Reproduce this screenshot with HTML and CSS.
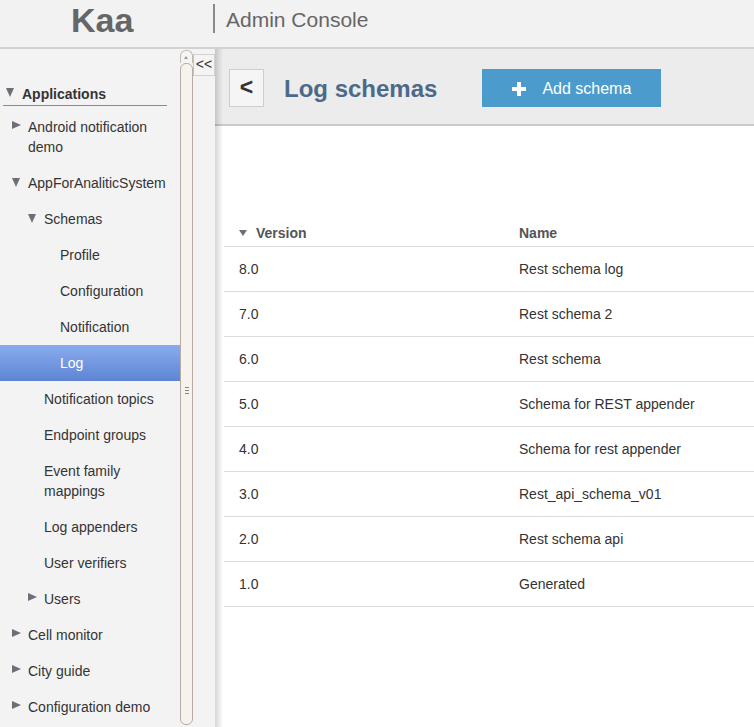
FILE: index.html
```html
<!DOCTYPE html>
<html>
<head>
<meta charset="utf-8">
<link rel="stylesheet" href="styles.css">
</head>
<body>
<header class="topbar">
  <div class="logo">Kaa</div>
  <div class="divider"></div>
  <div class="console">Admin Console</div>
</header>
<div class="main">
  <aside class="sidebar">
    <div class="apps"><span class="caret down"></span><span>Applications</span></div>
    <ul class="tree">
      <li class="row lv1"><span class="caret right"></span><span class="label">Android notification demo</span></li>
      <li class="row lv1"><span class="caret down"></span><span class="label">AppForAnaliticSystem</span></li>
      <li class="row lv2"><span class="caret down"></span><span class="label">Schemas</span></li>
      <li class="row lv3"><span class="caret"></span><span class="label">Profile</span></li>
      <li class="row lv3"><span class="caret"></span><span class="label">Configuration</span></li>
      <li class="row lv3"><span class="caret"></span><span class="label">Notification</span></li>
      <li class="row lv3 selected"><span class="caret"></span><span class="label">Log</span></li>
      <li class="row lv2"><span class="caret"></span><span class="label">Notification topics</span></li>
      <li class="row lv2"><span class="caret"></span><span class="label">Endpoint groups</span></li>
      <li class="row lv2"><span class="caret"></span><span class="label">Event family mappings</span></li>
      <li class="row lv2"><span class="caret"></span><span class="label">Log appenders</span></li>
      <li class="row lv2"><span class="caret"></span><span class="label">User verifiers</span></li>
      <li class="row lv2"><span class="caret right"></span><span class="label">Users</span></li>
      <li class="row lv1"><span class="caret right"></span><span class="label">Cell monitor</span></li>
      <li class="row lv1"><span class="caret right"></span><span class="label">City guide</span></li>
      <li class="row lv1"><span class="caret right"></span><span class="label">Configuration demo</span></li>
    </ul>
  </aside>
  <div class="scrollbar">
    <div class="sb-up"><span class="sb-arrow"></span></div>
    <div class="sb-thumb"><span class="grip"></span><span class="grip"></span><span class="grip"></span></div>
  </div>
  <div class="collapse-col">
    <div class="collapse-btn">&lt;&lt;</div>
  </div>
  <section class="content">
    <div class="toolbar">
      <div class="back-btn">&lt;</div>
      <h1 class="title">Log schemas</h1>
      <div class="add-btn">
        <svg class="plus" width="14" height="14" viewBox="0 0 14 14"><rect x="5" y="0" width="4" height="14" fill="#fff"/><rect x="0" y="5" width="14" height="4" fill="#fff"/></svg>
        <span>Add schema</span>
      </div>
    </div>
    <div class="panel">
      <table class="grid">
        <thead>
          <tr><th class="c1"><span class="sort"></span>Version</th><th>Name</th></tr>
        </thead>
        <tbody>
          <tr><td class="c1">8.0</td><td>Rest schema log</td></tr>
          <tr><td class="c1">7.0</td><td>Rest schema 2</td></tr>
          <tr><td class="c1">6.0</td><td>Rest schema</td></tr>
          <tr><td class="c1">5.0</td><td>Schema for REST appender</td></tr>
          <tr><td class="c1">4.0</td><td>Schema for rest appender</td></tr>
          <tr><td class="c1">3.0</td><td>Rest_api_schema_v01</td></tr>
          <tr><td class="c1">2.0</td><td>Rest schema api</td></tr>
          <tr><td class="c1">1.0</td><td>Generated</td></tr>
        </tbody>
      </table>
    </div>
  </section>
</div>
</body>
</html>
```
FILE: styles.css
```css
* { box-sizing: border-box; }
html, body { margin: 0; padding: 0; }
body {
  width: 754px;
  height: 727px;
  overflow: hidden;
  font-family: "Liberation Sans", Arial, sans-serif;
  color: #333;
  background: #f3f3f3;
}

.topbar {
  height: 49px;
  background: #f2f2f2;
  border-bottom: 2px solid #d2d2d2;
  display: flex;
  align-items: center;
  padding: 0 0 6px 71px;
}
.logo {
  font-size: 34px;
  font-weight: bold;
  color: #666;
  width: 142px;
}
.divider {
  width: 2px;
  height: 29px;
  background: #8a8a8a;
  margin-bottom: 5px;
}
.console {
  font-size: 21px;
  color: #666;
  margin-left: 11px;
  margin-bottom: 2px;
}

.main {
  display: flex;
  height: 678px;
}

.sidebar {
  width: 180px;
  flex: none;
  background: #f3f3f3;
  overflow: hidden;
  padding-top: 35px;
}
.apps {
  display: flex;
  align-items: flex-start;
  margin-left: 3px;
  width: 164px;
  padding-left: 3px;
  padding-bottom: 1px;
  font-size: 14px;
  font-weight: bold;
  line-height: 20px;
  border-bottom: 1px solid #8a8a8a;
  color: #333;
}
.apps .caret { width: 16px; height: 20px; }

.tree {
  list-style: none;
  margin: 3px 0 0 0;
  padding: 0;
}
.row {
  display: flex;
  align-items: flex-start;
  font-size: 14px;
  line-height: 20px;
  padding-top: 8px;
  padding-bottom: 8px;
  padding-right: 4px;
}
.lv1 { padding-left: 12px; }
.lv2 { padding-left: 28px; }
.lv3 { padding-left: 44px; }
.row .label { flex: 1; }
.caret {
  width: 16px;
  flex: none;
  height: 20px;
  position: relative;
}
.caret.right::before {
  content: "";
  position: absolute;
  left: 0;
  top: 4px;
  border-left: 9px solid #6c6f78;
  border-top: 4.5px solid transparent;
  border-bottom: 4.5px solid transparent;
}
.caret.down::before {
  content: "";
  position: absolute;
  left: 0;
  top: 5px;
  border-top: 9px solid #6c6f78;
  border-left: 4.5px solid transparent;
  border-right: 4.5px solid transparent;
}
.apps .caret.down::before { top: 4px; }
.selected {
  background: linear-gradient(#8aacef, #5e85d3);
  color: #fff;
}

.scrollbar {
  width: 13px;
  flex: none;
  background: #f3f3f3;
  padding-top: 1px;
  display: flex;
  flex-direction: column;
}
.sb-up {
  height: 13px;
  border: 1px solid #c2bab2;
  border-bottom: none;
  border-radius: 6px 6px 0 0;
  background: #f7f5f2;
  position: relative;
}
.sb-arrow {
  position: absolute;
  left: 3px;
  top: 5px;
  border-bottom: 3px solid #9a9a9a;
  border-left: 2.5px solid transparent;
  border-right: 2.5px solid transparent;
}
.sb-thumb {
  flex: 1;
  margin-bottom: 2px;
  border: 1px solid #b5ada5;
  border-radius: 6px;
  background: #f6f3ef;
  display: flex;
  flex-direction: column;
  align-items: center;
  justify-content: center;
  gap: 2px;
  padding-bottom: 8px;
}
.grip {
  width: 4px;
  height: 1px;
  background: #8a8480;
}

.collapse-col {
  width: 22px;
  flex: none;
  background: #f3f3f3;
  padding-top: 5px;
}
.collapse-btn {
  height: 22px;
  border: 1px solid #d2d2d2;
  border-left: 1px solid #c9c3bd;
  font-size: 14px;
  line-height: 19px;
  text-align: center;
  color: #333;
  background: #f4f4f4;
}

.content {
  flex: 1;
  min-width: 0;
  background: #fff;
  position: relative;
  display: flex;
  flex-direction: column;
}
.content::after {
  content: "";
  position: absolute;
  left: 0;
  top: 0;
  bottom: 0;
  width: 8px;
  background: linear-gradient(to right, rgba(0,0,0,0.16), rgba(0,0,0,0));
}

.toolbar {
  height: 77px;
  flex: none;
  background: #ececec;
  border-bottom: 2px solid #c9c9c9;
  display: flex;
  align-items: flex-start;
  padding: 20px 0 0 14px;
}
.back-btn {
  width: 35px;
  height: 38px;
  border: 1px solid #cdcdcd;
  background: #f5f5f5;
  font-size: 23px;
  font-weight: bold;
  line-height: 35px;
  text-align: center;
  color: #333;
}
.title {
  margin: 0 0 0 20px;
  padding-top: 1px;
  font-size: 24px;
  font-weight: bold;
  color: #4b6a89;
  line-height: 38px;
}
.add-btn {
  margin-left: 45px;
  width: 179px;
  height: 38px;
  background: #4b9bcc;
  color: #fff;
  font-size: 16px;
  display: flex;
  align-items: center;
  padding-left: 30px;
  padding-top: 1px;
}
.plus { margin-right: 16px; flex: none; }

.panel {
  flex: 1;
  padding: 90px 0 0 9px;
}
.grid {
  width: 100%;
  border-collapse: collapse;
  font-size: 14px;
  line-height: 20px;
}
.grid th {
  text-align: left;
  font-weight: bold;
  color: #555;
  padding: 7px 15px 3px 15px;
  border-bottom: 1px solid #dcdcdc;
}
.grid td {
  padding: 12px 15px;
  border-bottom: 1px solid #dcdcdc;
  color: #333;
}
.grid .c1 { width: 280px; }
.sort {
  display: inline-block;
  vertical-align: 2px;
  margin-right: 9px;
  border-top: 6px solid #6c6f78;
  border-left: 4.5px solid transparent;
  border-right: 4.5px solid transparent;
}
```
